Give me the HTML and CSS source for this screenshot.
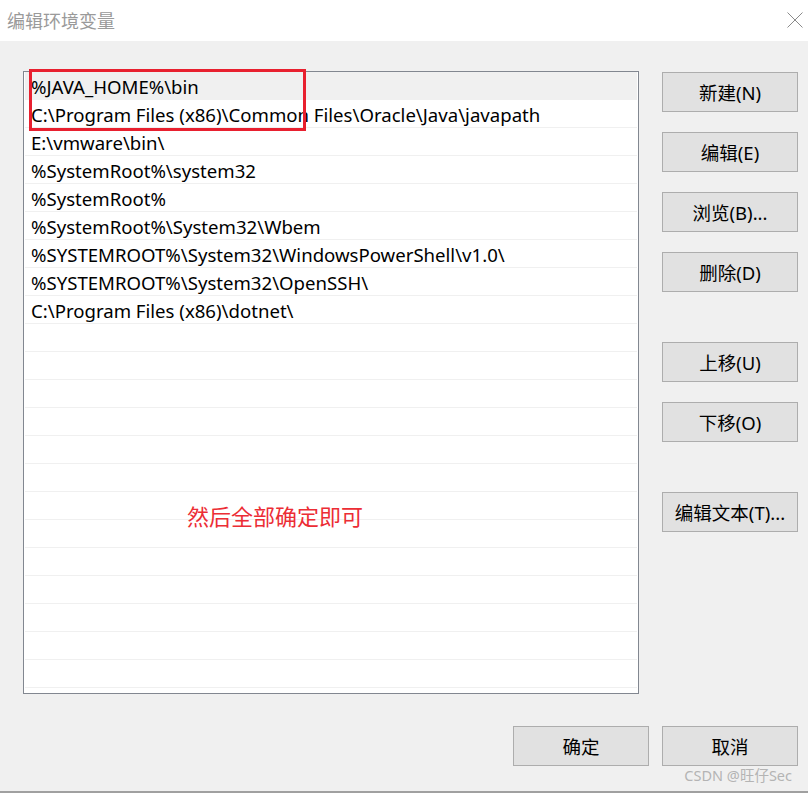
FILE: index.html
```html
<!DOCTYPE html>
<html lang="zh-CN">
<head>
<meta charset="utf-8">
<title>编辑环境变量</title>
<link rel="stylesheet" href="styles.css">
</head>
<body>
<div class="window">
  <div class="titlebar">
    <span class="title">编辑环境变量</span>
    <svg class="close" width="16" height="16" viewBox="0 0 16 16"><path d="M0.5 0.5 L15.5 15.5 M15.5 0.5 L0.5 15.5" stroke="#8a8a8a" stroke-width="1" fill="none"/></svg>
  </div>
  <div class="content">
    <div class="main">
      <div class="listbox">
        <div class="row selected">%JAVA_HOME%\bin</div>
        <div class="row">C:\Program Files (x86)\Common Files\Oracle\Java\javapath</div>
        <div class="row">E:\vmware\bin\</div>
        <div class="row">%SystemRoot%\system32</div>
        <div class="row">%SystemRoot%</div>
        <div class="row">%SystemRoot%\System32\Wbem</div>
        <div class="row">%SYSTEMROOT%\System32\WindowsPowerShell\v1.0\</div>
        <div class="row">%SYSTEMROOT%\System32\OpenSSH\</div>
        <div class="row">C:\Program Files (x86)\dotnet\</div>
        <div class="row"></div>
        <div class="row"></div>
        <div class="row"></div>
        <div class="row"></div>
        <div class="row"></div>
        <div class="row"></div>
        <div class="row"></div>
        <div class="row"></div>
        <div class="row"></div>
        <div class="row"></div>
        <div class="row"></div>
        <div class="row"></div>
        <div class="row"></div>
        <div class="highlight"></div>
        <div class="note">然后全部确定即可</div>
      </div>
      <div class="side">
        <div class="group">
          <button class="btn">新建(N)</button>
          <button class="btn">编辑(E)</button>
          <button class="btn">浏览(B)...</button>
          <button class="btn">删除(D)</button>
        </div>
        <div class="group">
          <button class="btn">上移(U)</button>
          <button class="btn">下移(O)</button>
        </div>
        <div class="group">
          <button class="btn">编辑文本(T)...</button>
        </div>
      </div>
    </div>
    <div class="footer">
      <button class="btn">确定</button>
      <button class="btn">取消</button>
    </div>
  </div>
  <div class="watermark">CSDN @旺仔Sec</div>
</div>
</body>
</html>
```
FILE: styles.css
```css
* { box-sizing: border-box; }
html, body { margin: 0; padding: 0; }
body {
  width: 808px;
  height: 793px;
  overflow: hidden;
  background: #f0f0f0;
  font-family: "Noto Sans", "Noto Sans CJK SC", sans-serif;
  color: #000;
}
.window {
  position: relative;
  width: 808px;
  height: 793px;
  display: flex;
  flex-direction: column;
  border-bottom: 2px solid #a0a0a0;
}
.titlebar {
  height: 41px;
  background: #fff;
  display: flex;
  align-items: center;
  justify-content: space-between;
  padding: 0 5px 2px 7px;
}
.title {
  font-family: "Noto Sans CJK SC", sans-serif;
  font-size: 18px;
  color: #9a9a9a;
  line-height: 20px;
}
.close { margin-top: 1px; }
.content {
  flex: 1;
  display: flex;
  flex-direction: column;
  padding: 30px 10px 0 23px;
}
.main {
  display: flex;
  gap: 23px;
}
.listbox {
  position: relative;
  width: 616px;
  height: 623px;
  background: #fff;
  border: 1px solid #828790;
  padding: 0 1px;
}
.row {
  height: 28px;
  line-height: 29px;
  border-bottom: 1px solid #f0f0f0;
  padding-left: 6px;
  font-size: 18.6px;
  white-space: nowrap;
}
.row.selected {
  background: #f0f0f0;
}
.highlight {
  position: absolute;
  left: 5px;
  top: -3px;
  width: 277px;
  height: 62px;
  border: 3px solid #e8202f;
}
.note {
  position: absolute;
  left: 163px;
  top: 431px;
  font-family: "Noto Sans CJK SC", sans-serif;
  font-size: 22px;
  line-height: 24px;
  color: #ec2d35;
}
.side {
  display: flex;
  flex-direction: column;
  gap: 50px;
  padding-top: 1px;
}
.group {
  display: flex;
  flex-direction: column;
  gap: 20px;
}
.btn {
  width: 136px;
  height: 40px;
  background: #e1e1e1;
  border: 1px solid #adadad;
  font-family: "Noto Sans", "Noto Sans CJK SC", sans-serif;
  font-size: 18.5px;
  color: #000;
  padding: 0;
  margin: 0;
}
.footer {
  display: flex;
  justify-content: flex-end;
  gap: 13px;
  padding-top: 32px;
}
.watermark {
  position: absolute;
  right: 16px;
  bottom: 6px;
  font-family: "Noto Sans", "Noto Sans CJK SC", sans-serif;
  font-size: 14.5px;
  color: #b4b4b4;
}
```
